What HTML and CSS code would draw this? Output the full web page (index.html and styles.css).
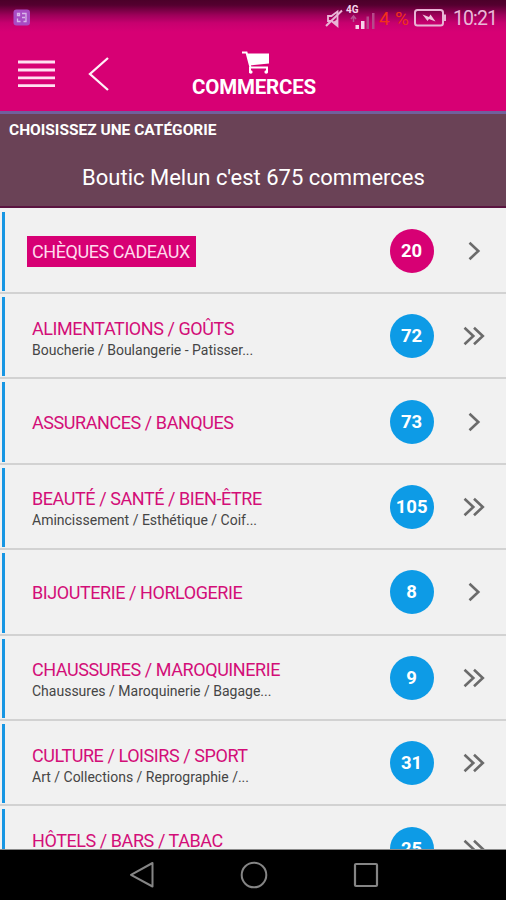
FILE: index.html
```html
<!DOCTYPE html>
<html lang="fr">
<head>
<meta charset="utf-8">
<title>Commerces</title>
<link rel="stylesheet" href="styles.css">
</head>
<body>
<svg class="defs" width="0" height="0" aria-hidden="true">
  <symbol id="one" viewBox="0 0 24 24"><path d="M7.500 3.800L16.300 12L7.500 20.200" fill="none" stroke="#6b6b6b" stroke-width="2.6"/></symbol>
  <symbol id="two" viewBox="0 0 24 24"><path d="M2.500 3.800L11.300 12L2.500 20.200M12 3.800L20.800 12L12 20.200" fill="none" stroke="#6b6b6b" stroke-width="2.6"/></symbol>
</svg>
<div class="app">
  <header class="top">
    <div class="status">
      <svg class="notif" width="18" height="18" viewBox="0 0 18 18"><rect x="0.500" y="0.500" width="16.500" height="16" rx="3" fill="#a84cc4"/><path d="M4.500 4.500h2v2h-2zM4.500 9.500v3h3M9 4.500h4v8h-2.500M9 8.500h3" fill="none" stroke="#d9b5ea" stroke-width="1.300"/></svg>
      <span class="fill"></span>
      <svg class="mute" width="18" height="19" viewBox="0 0 18 19"><path d="M3 7h3.500l6-4.500v14.500l-6-5H3z" fill="none" stroke="#e9b6d6" stroke-width="1.800"/><path d="M8 13l5-3v7z" fill="#e9b6d6"/><path d="M1 17L17 1.500" stroke="#e9b6d6" stroke-width="2"/></svg>
      <span class="signal"><b>4G</b>
        <svg width="28" height="21" viewBox="0 0 28 21"><path d="M3.500 6v6M1 9l2.500-3L6 9" fill="none" stroke="#b75593" stroke-width="1.500"/><path d="M5.500 15h3.500v4H5.500zM11 11h3.500v8h-3.500z" fill="#f5d3e8"/><path d="M16.500 6.500h2.500V19h-2.500zM22 3h2.500v16H22z" fill="#b64a8b"/></svg>
      </span>
      <span class="pct">4 %</span>
      <svg class="batt" width="33" height="18" viewBox="0 0 33 18"><rect x="1" y="1" width="28" height="15.500" rx="2.500" fill="none" stroke="#e8b5d5" stroke-width="2"/><path d="M30 5.500h2v6.500h-2z" fill="#e8b5d5"/><path d="M8.500 5.500L15 8l1.500-2.500 5 7L15 10l-1.500 2z" fill="#efc7df"/></svg>
      <span class="clock">10:21</span>
    </div>
    <nav class="bar">
      <svg class="burger" width="38" height="28" viewBox="0 0 38 28"><path d="M0 2h37M0 10h37M0 17.800h37M0 25.700h37" stroke="#ffe0f1" stroke-width="2.800"/></svg>
      <svg class="back" width="22" height="36" viewBox="0 0 22 36"><path d="M20 2L2 18L20 34" fill="none" stroke="#fff0f8" stroke-width="2.300"/></svg>
      <div class="brand">
        <svg class="cart" width="30" height="24" viewBox="0 0 30 24"><path d="M2 1.500h4.500L10.500 16.500H27v5" fill="none" stroke="#fff" stroke-width="2"/><path d="M7 2.500H29V12.500L10 14.500z" fill="#fff"/><path d="M10 16v6" stroke="#fff" stroke-width="2"/><circle cx="10.800" cy="21" r="1.800" fill="#fff"/><circle cx="26.200" cy="21" r="1.800" fill="#fff"/></svg>
        <h1>COMMERCES</h1>
      </div>
    </nav>
  </header>
  <section class="intro">
    <h2>CHOISISSEZ UNE CATÉGORIE</h2>
    <p>Boutic Melun c'est 675 commerces</p>
  </section>
  <main class="list">
    <div class="row"><div class="text"><h3 class="gift">CHÈQUES CADEAUX</h3></div><span class="badge pink">20</span><svg class="arrow"><use href="#one"/></svg></div>
    <div class="row"><div class="text"><h3>ALIMENTATIONS / GOÛTS</h3><p>Boucherie / Boulangerie - Patisser...</p></div><span class="badge">72</span><svg class="arrow"><use href="#two"/></svg></div>
    <div class="row"><div class="text"><h3>ASSURANCES / BANQUES</h3></div><span class="badge">73</span><svg class="arrow"><use href="#one"/></svg></div>
    <div class="row"><div class="text"><h3>BEAUTÉ / SANTÉ / BIEN-ÊTRE</h3><p>Amincissement / Esthétique / Coif...</p></div><span class="badge">105</span><svg class="arrow"><use href="#two"/></svg></div>
    <div class="row"><div class="text"><h3>BIJOUTERIE / HORLOGERIE</h3></div><span class="badge">8</span><svg class="arrow"><use href="#one"/></svg></div>
    <div class="row"><div class="text"><h3>CHAUSSURES / MAROQUINERIE</h3><p>Chaussures / Maroquinerie / Bagage...</p></div><span class="badge">9</span><svg class="arrow"><use href="#two"/></svg></div>
    <div class="row"><div class="text"><h3>CULTURE / LOISIRS / SPORT</h3><p>Art / Collections / Reprographie /...</p></div><span class="badge">31</span><svg class="arrow"><use href="#two"/></svg></div>
    <div class="row"><div class="text"><h3>HÔTELS / BARS / TABAC</h3><p>&nbsp;</p></div><span class="badge">25</span><svg class="arrow"><use href="#two"/></svg></div>
  </main>
  <footer class="keys">
    <svg width="26" height="28" viewBox="0 0 26 28"><path d="M23.500 2V25.500L2 13.800z" fill="none" stroke="#858585" stroke-width="2" stroke-linejoin="round"/></svg>
    <svg width="28" height="28" viewBox="0 0 28 28"><circle cx="14" cy="14" r="12.300" fill="none" stroke="#858585" stroke-width="2"/></svg>
    <svg width="26" height="28" viewBox="0 0 26 28"><rect x="2" y="3" width="22" height="22" rx="1" fill="none" stroke="#858585" stroke-width="2.200"/></svg>
  </footer>
</div>
</body>
</html>
```
FILE: styles.css
```css
* { box-sizing: border-box; }
body, h1, h2, h3, p { margin: 0; }
body { font-family: Roboto, sans-serif; background: #000; }
svg { display: block; flex: none; }
.defs { position: absolute; }
.app { width: 506px; height: 900px; display: flex; flex-direction: column; overflow: hidden; }
.top { height: 114px; flex: none; border-bottom: 3px solid #70609c; background: linear-gradient(#4b0029 0, #54002f 5px, #9c0059 15px, #c7006f 23px, #d70074 32px); }
.status { height: 36px; display: flex; align-items: center; padding: 0 9px 0 13px; color: #eab9d8; }
.fill { flex: 1; }
.mute { margin-right: 4px; }
.signal { width: 32px; height: 30px; display: flex; flex-direction: column; font-size: 10px; line-height: 8px; color: #f6d9eb; padding-top: 3px; }
.signal b { margin-left: -1px; }
.signal svg { margin: -4px 0 0 3px; }
.pct { color: #f2311a; font-size: 19px; width: 35px; white-space: nowrap; letter-spacing: 0.3px; }
.clock { font-size: 19.5px; margin-left: 6px; letter-spacing: -0.9px; }
.bar { height: 75px; display: flex; padding-left: 18px; }
.burger { margin-top: 24px; }
.back { margin: 20px 0 0 32px; }
.brand { width: 124px; margin-left: 82px; display: flex; flex-direction: column; align-items: center; padding-top: 15px; }
.cart { margin-left: 2px; }
h1 { font-size: 20.5px; line-height: 24px; font-weight: 700; color: #fff; letter-spacing: -0.2px; white-space: nowrap; }
.intro { height: 94px; flex: none; background: #6a4256; border-bottom: 2px solid #5a1440; color: #fff; }
h2 { font-size: 15.5px; line-height: 20px; font-weight: 700; padding: 6px 0 0 9px; }
.intro p { font-size: 22px; line-height: 28px; text-align: center; margin-top: 24px; padding-left: 1px; }
.list { flex: 1; min-height: 0; overflow: hidden; background: #f1f1f1; border-bottom: 1px solid #8a8a8a; padding-top: 0.6px; }
.row { height: 85.4px; display: flex; align-items: center; border-bottom: 2px solid #d2d2d2; padding-top: 1px; }
.row::before { content: ""; width: 3px; margin: 2px 0 1px 2px; align-self: stretch; background: #1796e3; }
.text { flex: 1; padding: 2px 0 0 27px; }
h3 { font-size: 18px; line-height: 22px; font-weight: 400; color: #d30e78; white-space: nowrap; letter-spacing: -0.43px; }
h3:not(:only-child) { padding-top: 3px; }
.gift { display: block; width: 169px; background: #d70074; color: #ffd9ed; padding: 5px 0 4px 5px; margin: -1px 0 0 -5px; }
.text p { font-size: 14px; line-height: 20px; color: #454545; white-space: nowrap; }
.badge { width: 44px; height: 44px; border-radius: 50%; background: #0d9be6; color: #fff; font-size: 18.5px; font-weight: 700; line-height: 45px; text-align: center; margin-right: 28.4px; }
.pink { background: #d70074; }
.arrow { width: 24px; height: 24px; margin-right: 20px; }
.keys { height: 50px; flex: none; background: #000; display: flex; align-items: center; justify-content: center; gap: 85px; padding-left: 1px; }
```
